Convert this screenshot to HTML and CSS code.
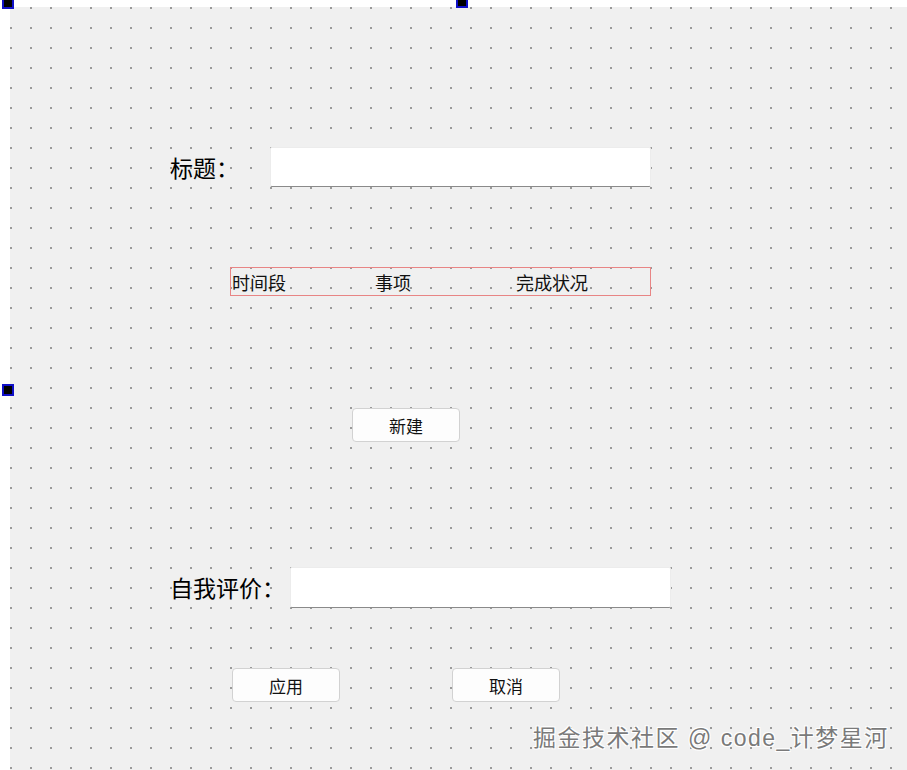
FILE: index.html
```html
<!DOCTYPE html>
<html lang="zh-CN">
  <head>
    <meta charset="UTF-8" />
    <title>日程表单</title>
    <link rel="stylesheet" href="styles.css">
  </head>

  <body>
    <span class="handle handle-tl"></span>
    <span class="handle handle-tm"></span>
    <span class="handle handle-ml"></span>

    <div class="form">
      <div class="row title-row">
        <label class="label title-label">标题：</label>
        <input class="line-edit title-edit" type="text" />
      </div>

      <div class="table-header">
        <span>时间段</span>
        <span>事项</span>
        <span>完成状况</span>
      </div>

      <div class="row new-row">
        <button class="push-btn">新建</button>
      </div>

      <div class="row eval-row">
        <label class="label eval-label">自我评价：</label>
        <input class="line-edit eval-edit" type="text" />
      </div>

      <div class="row action-row">
        <button class="push-btn">应用</button>
        <button class="push-btn">取消</button>
      </div>

      <div class="watermark">掘金技术社区 @ code_计梦星河</div>
    </div>
  </body>
</html>
```

FILE: styles.css
```css
html,
body {
  margin: 0;
  height: 100%;
  overflow: hidden;
}

body {
  font-family: "Noto Sans CJK SC", "Noto Sans", sans-serif;
  background-color: #ffffff;
  position: relative;
}

.form {
  position: relative;
  margin: 7px 0 0 10px;
  height: 763px;
  background-color: #f0f0f0;
  background-image: radial-gradient(circle at 1px 1px, #9a9a9a 0.9px, transparent 1.1px);
  background-size: 20px 20px;
  overflow: hidden;
}

.handle {
  position: absolute;
  width: 8px;
  height: 8px;
  background-color: #000;
  border: 2px solid #1010c8;
  z-index: 2;
}

.handle-tl {
  left: 2px;
  top: -3px;
}

.handle-tm {
  left: 456px;
  top: -4px;
}

.handle-ml {
  left: 2px;
  top: 384px;
}

.row {
  display: flex;
  align-items: center;
}

.label {
  color: #000;
  font-size: 23px;
  line-height: 1;
}

.title-row {
  padding-top: 140px;
  padding-left: 160px;
}

.title-label {
  width: 100px;
}

.eval-label {
  width: 120px;
}

.line-edit {
  box-sizing: border-box;
  width: 381px;
  height: 40px;
  margin: 0;
  background: #fff;
  border: 1px solid #ececec;
  border-bottom: 1px solid #8a8a8a;
  border-radius: 2px;
  outline: none;
}

.eval-edit {
  height: 41px;
}

.table-header {
  box-sizing: border-box;
  display: grid;
  grid-template-columns: 143px 141px 1fr;
  align-items: center;
  width: 421px;
  height: 29px;
  margin: 80px 0 0 220px;
  padding-left: 1px;
  border: 1px solid #e88585;
  font-size: 18px;
  color: #111;
}

.new-row {
  margin-top: 112px;
  padding-left: 342px;
}

.eval-row {
  margin-top: 125px;
  padding-left: 160px;
}

.action-row {
  margin-top: 60px;
  padding-left: 222px;
  gap: 112px;
}

.push-btn {
  box-sizing: border-box;
  width: 108px;
  height: 34px;
  padding: 0;
  background-color: #fdfdfd;
  border: 1px solid #d2d2d2;
  border-radius: 4px;
  font-family: "Noto Sans CJK SC", "Noto Sans", sans-serif;
  font-size: 17px;
  color: #111;
}

.watermark {
  position: absolute;
  left: 523px;
  top: 712px;
  font-family: "Liberation Sans", "Noto Sans CJK SC", sans-serif;
  font-size: 23px;
  letter-spacing: 1.5px;
  color: #7a7a7a;
  text-shadow: 1px 1px 0 #fff, -1px -1px 0 #fff, 1px -1px 0 #fff, -1px 1px 0 #fff;
  white-space: nowrap;
}
```
